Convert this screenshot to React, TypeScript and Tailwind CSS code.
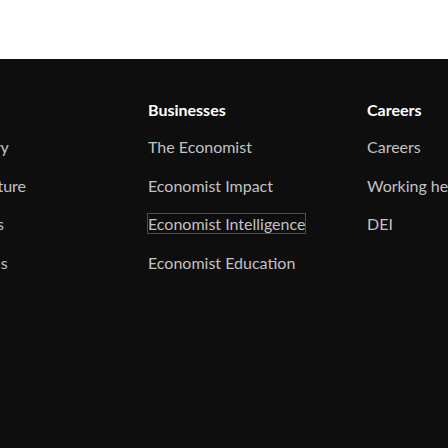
const columns = [
  {
    title: "About",
    links: ["Our history", "Group culture", "Our values", "Our brands"],
  },
  {
    title: "Businesses",
    links: [
      "The Economist",
      "Economist Impact",
      "Economist Intelligence",
      "Economist Education",
    ],
  },
  {
    title: "Careers",
    links: ["Careers", "Working here", "DEI"],
  },
];

const App = () => {
  return (
    <div className="w-[448px] h-[448px] overflow-hidden bg-white font-['Lato','Open_Sans',sans-serif]">
      <div className="h-[59px] bg-white" />
      <footer className="h-[389px] bg-[#0e0e0e] pt-[41px]">
        <div className="flex ml-[-71px]">
          {columns.map((col) => (
            <div key={col.title} className="w-[219px] shrink-0">
              <h3 className="text-[16px] leading-[20px] font-bold text-white whitespace-nowrap">
                {col.title}
              </h3>
              <ul className="mt-[17px] flex flex-col gap-[18.5px]">
                {col.links.map((link) => (
                  <li key={link} className="text-[16px] leading-[20px] text-[#c2c2c2] whitespace-nowrap">
                    <a
                      className={
                        link === "Economist Intelligence"
                          ? "outline outline-1 outline-[#ff0000]"
                          : ""
                      }
                    >
                      {link}
                    </a>
                  </li>
                ))}
              </ul>
            </div>
          ))}
        </div>
      </footer>
    </div>
  );
};
export default App;
